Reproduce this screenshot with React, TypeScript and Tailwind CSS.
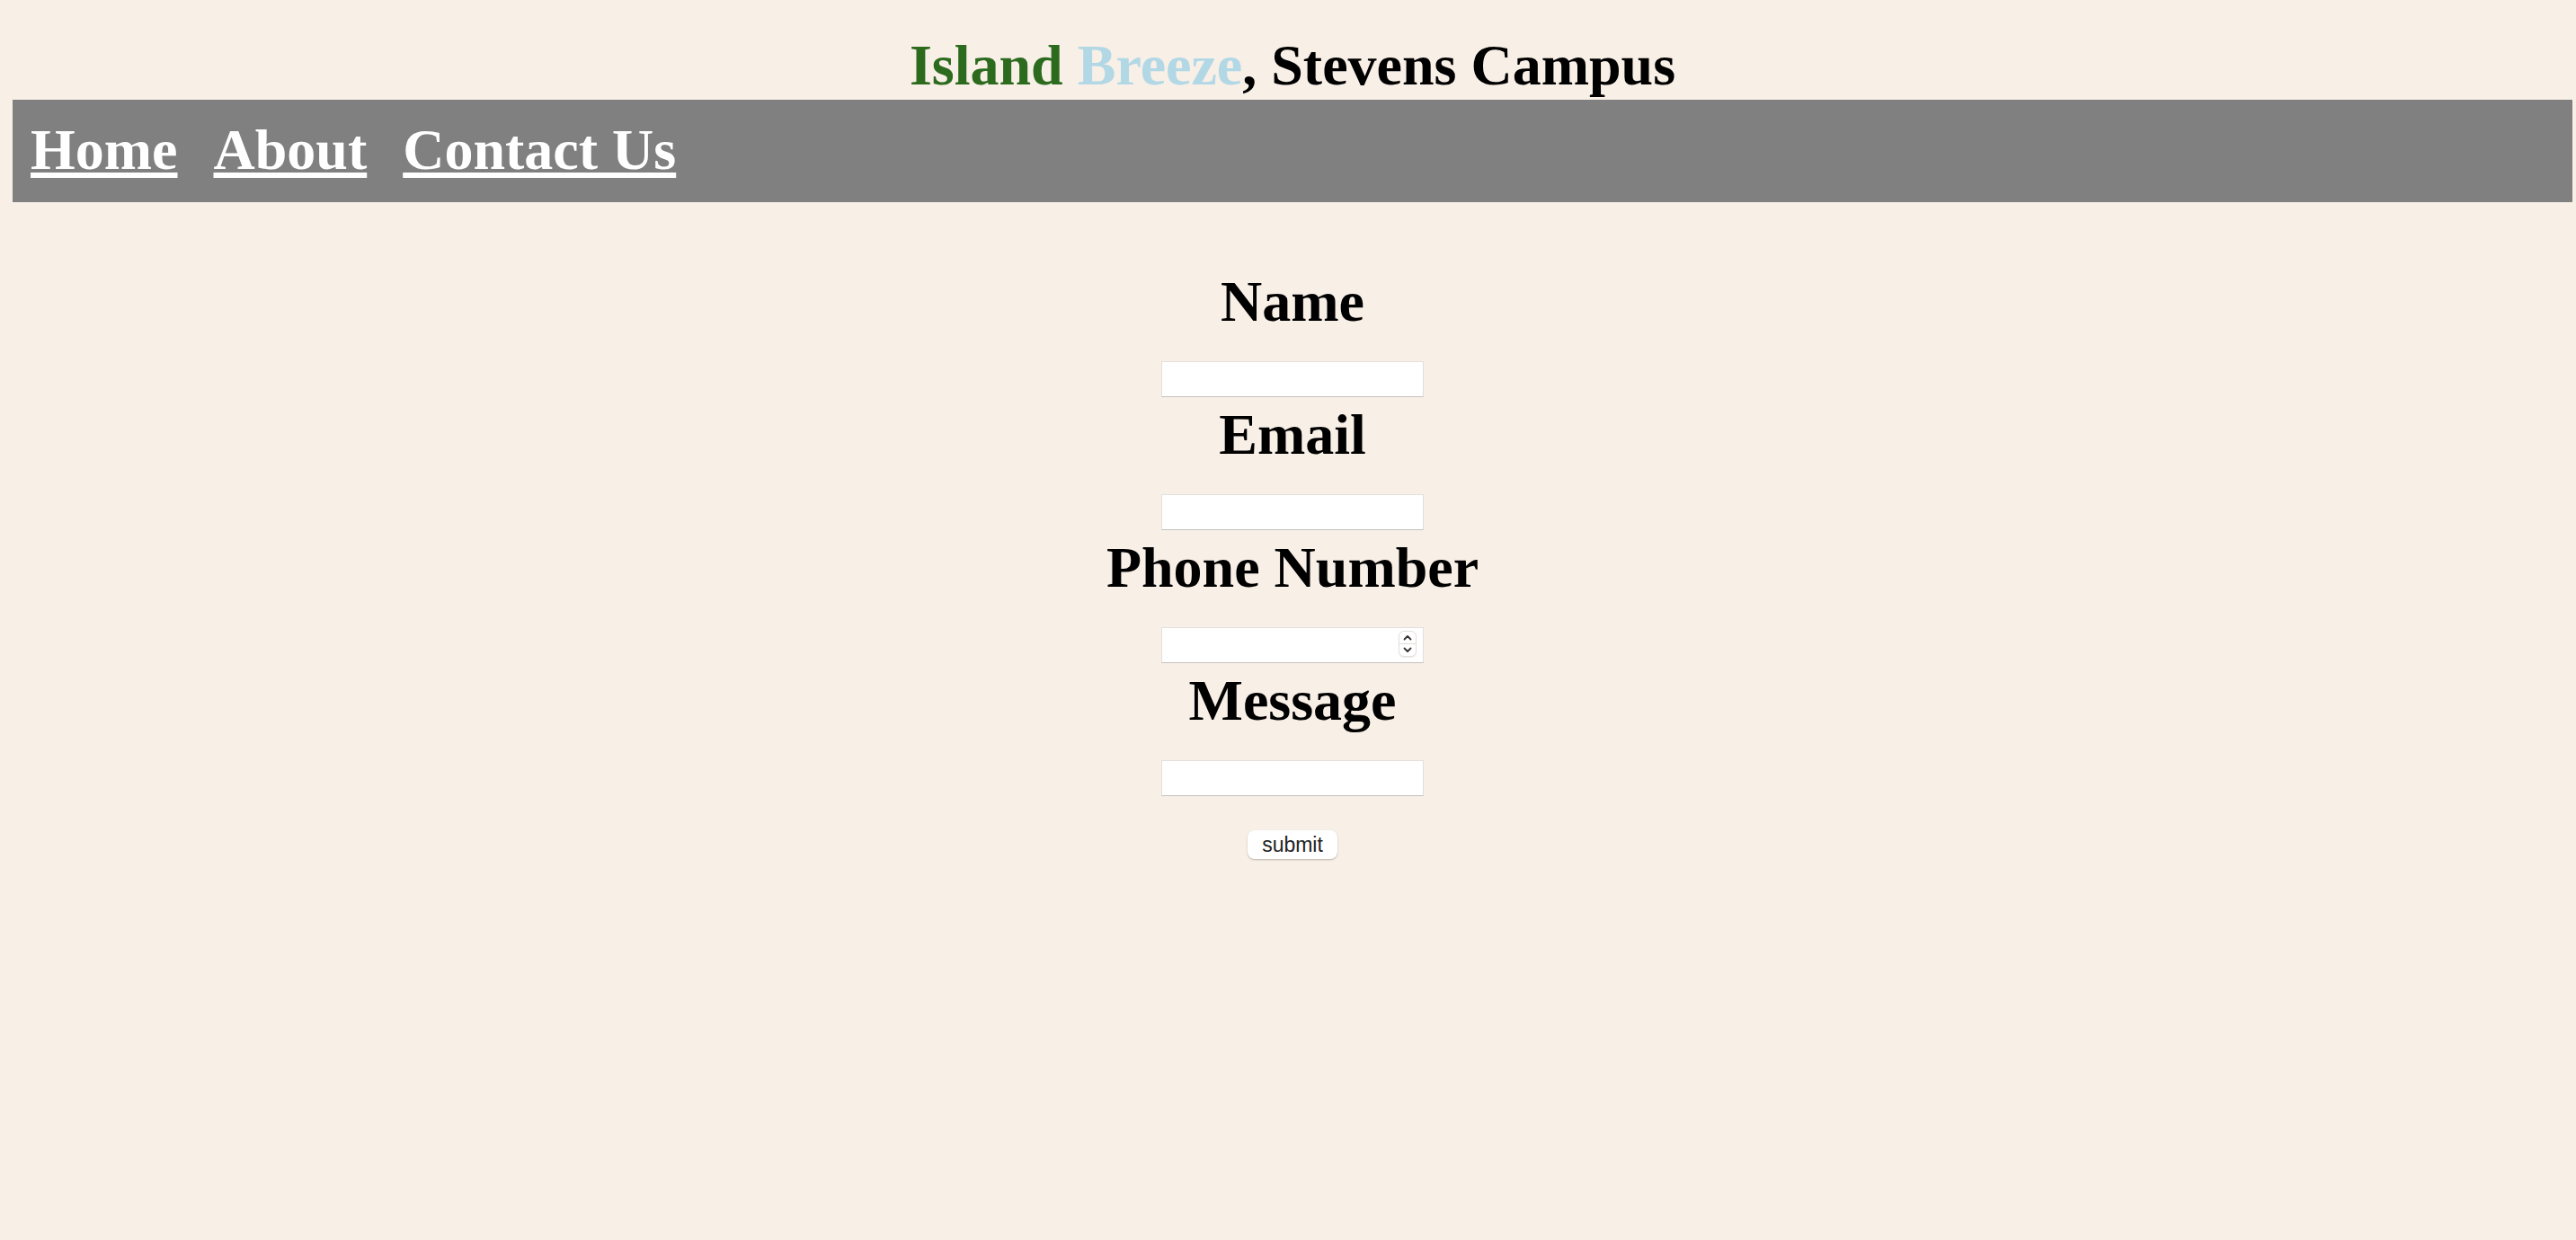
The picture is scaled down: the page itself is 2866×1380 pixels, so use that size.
const fields = ['Name', 'Email', 'Phone Number', 'Message'];

const Spinner = () => (
  <div className="absolute right-[8px] top-[4px] flex h-[29px] w-[20px] flex-col overflow-hidden rounded-[6px] border border-[#e2e0de] bg-white shadow-[0_1px_1px_rgba(0,0,0,0.08)]">
    <div className="flex flex-1 items-center justify-center border-b border-[#dedcda]">
      <svg width="10" height="7" viewBox="0 0 10 7">
        <path d="M1.5 5.5 L5 2 L8.5 5.5" fill="none" stroke="#333" strokeWidth="1.8" strokeLinecap="round" strokeLinejoin="round" />
      </svg>
    </div>
    <div className="flex flex-1 items-center justify-center">
      <svg width="10" height="7" viewBox="0 0 10 7">
        <path d="M1.5 1.5 L5 5 L8.5 1.5" fill="none" stroke="#333" strokeWidth="1.8" strokeLinecap="round" strokeLinejoin="round" />
      </svg>
    </div>
  </div>
);

const App = () => {
  const links = ['Home', 'About', 'Contact Us'];

  return (
    <div className="min-h-screen bg-[#f8efe7] pl-[14px] pr-[4px] font-['Liberation_Serif',serif] text-black">
      {/* Title */}
      <h1 className="pt-[37px] text-center text-[64px] font-bold leading-[71px]">
        <span className="text-[#2c6a1e]">Island</span>{' '}
        <span className="text-[#b2d8e6]">Breeze</span>, Stevens Campus
      </h1>

      {/* Nav bar */}
      <nav className="mt-[3px] flex h-[114px] gap-[40px] bg-[#808080] pl-[20px] pt-[20px]">
        {links.map((link) => (
          <a
            key={link}
            href="#"
            className="text-[64px] font-bold leading-[71px] text-white underline"
          >
            {link}
          </a>
        ))}
      </nav>

      {/* Contact form */}
      <form className="mt-[75px] flex flex-col items-center" onSubmit={(e) => e.preventDefault()}>
        {fields.map((field) => (
          <div key={field} className="flex flex-col items-center">
            <label className="text-[64px] font-bold leading-[71px]">{field}</label>
            <div className="relative mb-[6px] mt-[31px]">
              <input
                type="text"
                className="block h-[40px] w-[292px] border border-[#e3dfdb] border-b-[#c4c1be] bg-white px-2 text-[24px] outline-none"
              />
              {field === 'Phone Number' && <Spinner />}
            </div>
          </div>
        ))}
        <button
          type="submit"
          className="mt-[32px] h-[32px] w-[100px] rounded-[8px] bg-white font-['Liberation_Sans',sans-serif] text-[23px] leading-none text-[#222] shadow-[0_1px_2px_rgba(0,0,0,0.25)]"
        >
          submit
        </button>
      </form>
    </div>
  );
};

export default App;
